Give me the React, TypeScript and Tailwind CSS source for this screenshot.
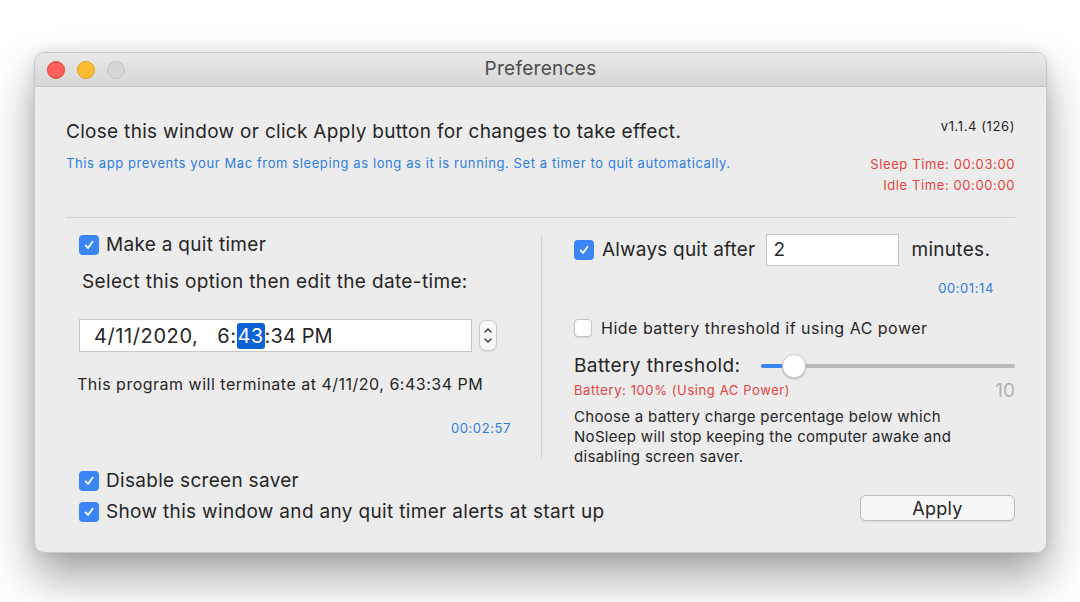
import React from 'react'

const font = { fontFamily: 'Inter, "Noto Sans", "Liberation Sans", sans-serif' }

function Check({ checked = true, size = 20 }: { checked?: boolean; size?: number }) {
  if (!checked) {
    return (
      <span
        className="inline-block shrink-0 rounded-[4px] border border-[#c4c4c4] bg-white shadow-[0_1px_1px_rgba(0,0,0,0.08)]"
        style={{ width: size, height: size }}
      />
    )
  }
  return (
    <span
      className="inline-flex shrink-0 items-center justify-center rounded-[4px] bg-[#3b86f7]"
      style={{ width: size, height: size }}
    >
      <svg width="12" height="12" viewBox="0 0 12 12" fill="none">
        <path d="M2.6 6.4 L5 9 L9.6 2.8" stroke="white" strokeWidth="1.8" strokeLinecap="round" strokeLinejoin="round" />
      </svg>
    </span>
  )
}

function Stepper() {
  return (
    <div className="flex h-[31px] w-[18px] flex-col items-center justify-center gap-[5px] rounded-[7px] border border-[#c9c9c9] bg-[#f8f8f8] shadow-[0_1px_1px_rgba(0,0,0,0.06)]">
      <svg width="8" height="5" viewBox="0 0 8 5" fill="none">
        <path d="M1 4 L4 1 L7 4" stroke="#333" strokeWidth="1.4" strokeLinecap="round" strokeLinejoin="round" />
      </svg>
      <svg width="8" height="5" viewBox="0 0 8 5" fill="none">
        <path d="M1 1 L4 4 L7 1" stroke="#333" strokeWidth="1.4" strokeLinecap="round" strokeLinejoin="round" />
      </svg>
    </div>
  )
}

export default function App() {
  return (
    <div className="h-[602px] w-[1080px] overflow-hidden bg-white pl-[34px] pt-[52px] text-[#262626]" style={font}>
      <div className="flex h-[501px] w-[1013px] flex-col overflow-hidden rounded-[10px] border border-[#c8c8c8] bg-[#ececec] shadow-[0_24px_45px_rgba(0,0,0,0.36),0_0_14px_rgba(0,0,0,0.1)]">
        {/* title bar */}
        <div className="relative flex h-[34px] shrink-0 items-center border-b border-[#c2c2c2] bg-gradient-to-b from-[#e9e9e9] to-[#d6d6d6]">
          <div className="flex items-center gap-[12px] pl-[12px]">
            <span className="h-[18px] w-[18px] rounded-full border border-[#e0443e] bg-[#fe5f57]" />
            <span className="h-[18px] w-[18px] rounded-full border border-[#dea123] bg-[#febc2e]" />
            <span className="h-[18px] w-[18px] rounded-full border border-[#c4c4c4] bg-[#d6d6d6]" />
          </div>
          <div className="absolute inset-0 flex items-center justify-center text-[19px] tracking-[0.3px] text-[#4d4d4d]">Preferences</div>
        </div>

        {/* body */}
        <div className="flex flex-1 flex-col px-[31px] pt-[30px]">
          <div className="flex justify-between">
            <div>
              <div className="mt-[3px] text-[19px] leading-[24px] tracking-[0.3px]">Close this window or click Apply button for changes to take effect.</div>
              <div className="mt-[10px] text-[13px] leading-[18px] tracking-[0.6px] text-[#2f7de1]">
                This app prevents your Mac from sleeping as long as it is running. Set a timer to quit automatically.
              </div>
            </div>
            <div className="flex flex-col items-end text-[13px] leading-[18px] tracking-[0.6px]">
              <div>v1.1.4 (126)</div>
              <div className="mt-[20px] text-[#e5433d]">Sleep Time: 00:03:00</div>
              <div className="mt-[3px] text-[#e5433d]">Idle Time: 00:00:00</div>
            </div>
          </div>

          <div className="mt-[23px] h-px bg-[#d3d3d3]" />

          <div className="grid grid-cols-[475px_1px_1fr] items-start">
            {/* left column */}
            <div className="flex flex-col pl-[13px]">
              <div className="mt-[17px] flex h-[20px] items-center gap-[7px]">
                <Check />
                <span className="text-[19px] tracking-[0.3px]">Make a quit timer</span>
              </div>
              <div className="mt-[15px] pl-[3px] text-[19px] leading-[24px] tracking-[0.35px]">Select this option then edit the date-time:</div>
              <div className="mt-[25px] flex items-center gap-[7px]">
                <div className="flex h-[33px] w-[393px] items-center border border-[#c6c6c6] bg-white pl-[14px] text-[20px]">
                  <span className="whitespace-pre tracking-[0.6px]">4/11/2020,   6:</span>
                  <span className="rounded-[3px] bg-[#0b62d6] px-[1px] leading-[26px] tracking-[0.4px] text-white">43</span>
                  <span className="tracking-[0.1px]">:34 PM</span>
                </div>
                <Stepper />
              </div>
              <div className="mt-[22px] -ml-[2px] text-[16px] leading-[20px] tracking-[0.5px]">This program will terminate at 4/11/20, 6:43:34 PM</div>
              <div className="mt-[25px] pr-[30px] text-right text-[13px] leading-[18px] tracking-[0.6px] text-[#2f7de1]">00:02:57</div>
            </div>

            {/* divider */}
            <div className="mt-[17px] h-[223px] w-px bg-[#d3d3d3]" />

            {/* right column */}
            <div className="flex flex-col pl-[32px]">
              <div className="mt-[16px] flex h-[32px] items-center">
                <Check />
                <span className="ml-[8px] text-[19px] tracking-[0.2px]">Always quit after</span>
                <div className="ml-[11px] flex h-[32px] w-[133px] items-center border border-[#c6c6c6] bg-white pl-[6px] text-[19px]">2</div>
                <span className="ml-[12px] text-[19px] tracking-[0.3px]">minutes.</span>
              </div>
              <div className="mt-[13px] pr-[21px] text-right text-[13px] leading-[18px] tracking-[0.6px] text-[#2f7de1]">00:01:14</div>
              <div className="mt-[22px] flex h-[18px] items-center gap-[9px]">
                <Check checked={false} size={18} />
                <span className="text-[16px] tracking-[0.5px]">Hide battery threshold if using AC power</span>
              </div>
              <div className="mt-[17px] flex h-[24px] items-center">
                <span className="w-[187px] text-[19px] tracking-[0.4px]">Battery threshold:</span>
                <div className="relative flex h-[24px] flex-1 items-center">
                  <div className="h-[4px] w-full rounded-full bg-[#b9b9b9]" />
                  <div className="absolute left-0 top-[10px] h-[4px] w-[34px] rounded-full bg-[#3b86f7]" />
                  <div className="absolute left-[21px] top-0 h-[24px] w-[24px] rounded-full border border-[#cfcfcf] bg-white shadow-[0_1px_2px_rgba(0,0,0,0.25)]" />
                </div>
              </div>
              <div className="mt-[3px] flex h-[20px] items-center justify-between">
                <span className="text-[13px] tracking-[0.6px] text-[#e5433d]">Battery: 100% (Using AC Power)</span>
                <span className="text-[19px] text-[#b3b3b3]">10</span>
              </div>
              <div className="mt-[6px] w-[410px] text-[15px] leading-[20px] tracking-[0.3px]">
                Choose a battery charge percentage below which NoSleep will stop keeping the computer awake and disabling screen saver.
              </div>
            </div>
          </div>

          {/* bottom */}
          <div className="mt-[4px] flex items-end justify-between">
            <div className="flex flex-col gap-[11px] pl-[13px]">
              <div className="flex h-[20px] items-center gap-[7px]">
                <Check />
                <span className="text-[19px] tracking-[0.3px]">Disable screen saver</span>
              </div>
              <div className="flex h-[20px] items-center gap-[7px]">
                <Check />
                <span className="text-[19px] tracking-[0.33px]">Show this window and any quit timer alerts at start up</span>
              </div>
            </div>
            <button className="mb-[1px] flex h-[26px] w-[155px] items-center justify-center rounded-[6px] border border-[#bdbdbd] bg-[#f7f7f7] text-[18px] tracking-[0.3px] text-[#262626] shadow-[0_1px_1px_rgba(0,0,0,0.08)]">
              Apply
            </button>
          </div>
        </div>
      </div>
    </div>
  )
}
